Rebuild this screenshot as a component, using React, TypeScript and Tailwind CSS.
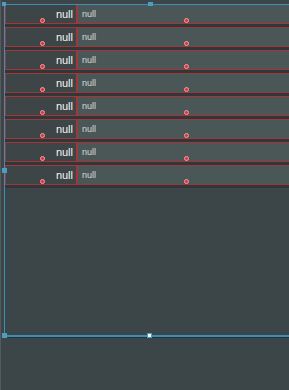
import React from "react";

const Dot = ({ cls }: { cls: string }) => (
  <span className={`absolute w-[5px] h-[5px] rounded-full bg-[#e0323c] border border-[#f2a0a8] ${cls}`} />
);

const Row = () => (
  <div className="flex flex-col">
    <div className="flex h-[20px]">
      <div className="relative w-[72px] shrink-0 border border-[#a3363b] bg-[#3d4547] flex items-center justify-end pr-[3px] pt-[1px]">
        <span className="text-[11px] leading-none text-[#f4f6f6]">null</span>
        <Dot cls="left-[34px] top-[13px]" />
      </div>
      <div className="relative w-[260px] shrink-0 border border-[#a3363b] bg-[#4b5757] flex items-start pl-[4px] pt-[5px]">
        <span className="text-[9px] leading-none text-[#d4dcdc]">null</span>
        <Dot cls="left-[106px] top-[13px]" />
      </div>
    </div>
    <div className="h-[3px] bg-[#2f3738]" />
  </div>
);

export default function App() {
  return (
    <div className="relative w-[289px] h-[390px] overflow-hidden bg-[#3c4547] font-['Liberation_Sans',sans-serif]">
      <div className="absolute left-0 top-0 bottom-0 w-[1px] bg-[#525b5d]" />
      <div className="pt-[4px] pl-[5px] flex flex-col">
        {Array.from({ length: 8 }).map((_, i) => (
          <Row key={i} />
        ))}
      </div>
      {/* selection overlay */}
      <div className="absolute left-[4px] top-[4px] w-[300px] h-[333px] border-l border-t border-b-2 border-[#3b8fb6] shadow-[0_1px_0_#2a3233]" />
      <div className="absolute left-[2px] top-[2px] w-[4px] h-[4px] bg-[#4d9cc2]" />
      <div className="absolute left-[148px] top-[2px] w-[5px] h-[4px] bg-[#4d9cc2]" />
      <div className="absolute left-[2px] top-[168px] w-[5px] h-[5px] bg-[#4d9cc2]" />
      <div className="absolute left-[2px] top-[333px] w-[5px] h-[5px] bg-[#4d9cc2]" />
      <div className="absolute left-[147px] top-[333px] w-[5px] h-[5px] bg-white border border-[#4d9cc2]" />
    </div>
  );
}
